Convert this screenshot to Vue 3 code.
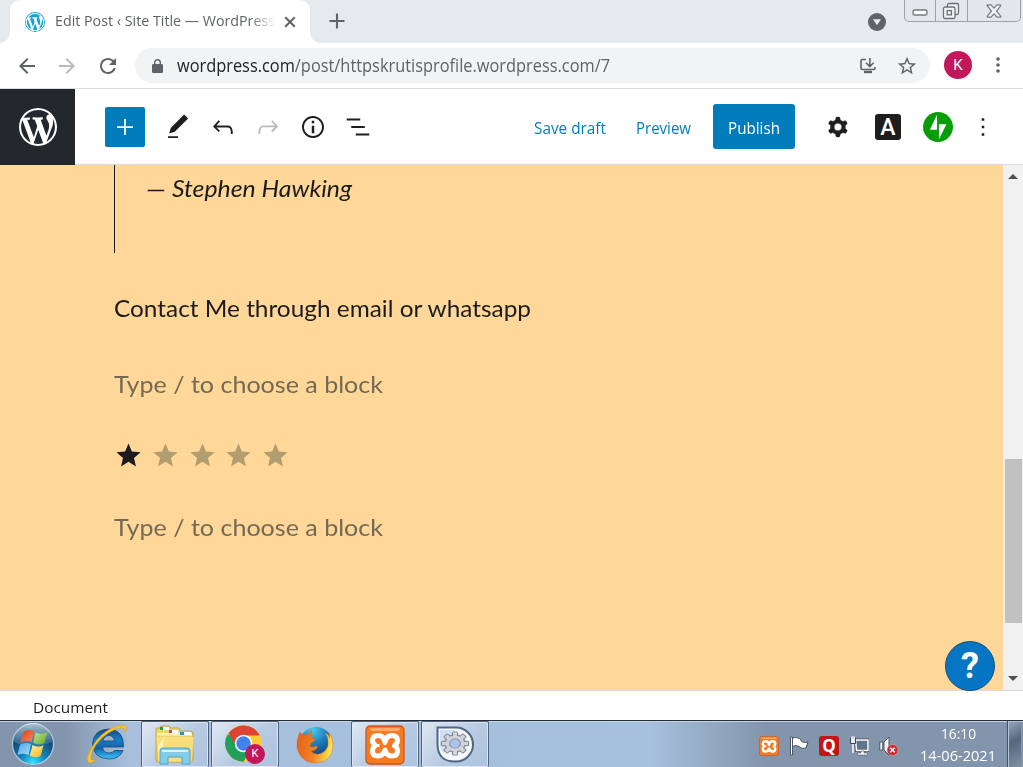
<script setup>
// Stretches a label horizontally so that it fills the given width in pixels.
const vFit = {
  mounted(el, { value }) {
    const natural = el.getBoundingClientRect().width
    el.style.transform = `scaleX(${value / natural})`
  },
}
const wp =
  'M20 10c0-5.51-4.49-10-10-10C4.48 0 0 4.49 0 10c0 5.52 4.48 10 10 10 5.51 0 10-4.48 10-10zM7.78 15.37L4.37 6.22c.55-.02 1.17-.08 1.17-.08.5-.06.44-1.13-.06-1.11 0 0-1.45.11-2.37.11-.18 0-.37 0-.58-.01C4.12 2.69 6.87 1.11 10 1.11c2.33 0 4.45.87 6.05 2.34-.68-.11-1.65.39-1.65 1.58 0 .74.45 1.36.9 2.1.35.61.55 1.36.55 2.46 0 1.49-1.4 5-1.4 5l-3.03-8.37c.54-.02.82-.17.82-.17.5-.05.44-1.25-.06-1.22 0 0-1.44.12-2.38.12-.87 0-2.33-.12-2.33-.12-.5-.03-.56 1.2-.06 1.22l.92.08 1.26 3.41zM17.41 10c.24-.64.74-1.87.43-4.25.7 1.29 1.05 2.71 1.05 4.25 0 3.29-1.73 6.24-4.4 7.78.97-2.59 1.94-5.2 2.92-7.78zM6.1 18.09C3.12 16.65 1.11 13.53 1.11 10c0-1.3.23-2.48.72-3.59C3.25 10.3 4.67 14.2 6.1 18.09zm4.03-6.63l2.58 6.98c-.86.29-1.76.45-2.71.45-.79 0-1.57-.11-2.29-.33.81-2.38 1.62-4.74 2.42-7.1z'
const back = 'M20 11H7.83l5.59-5.59L12 4l-8 8 8 8 1.41-1.41L7.83 13H20v-2z'
const star = 'M12 17.27L18.18 21l-1.64-7.03L22 9.24l-7.19-.61L12 2 9.19 8.63 2 9.24l5.46 4.73L5.82 21z'
const tools = [
  { name: 'edit', d: 'M20.1 5.1L16.9 2 6.2 12.7l-1.3 4.4 4.5-1.3L20.1 5.1zM4 20.8h8v-1.5H4v1.5z' },
  { name: 'undo', d: 'M18.3 11.7c-.6-.6-1.4-.9-2.3-.9H6.7l2.9-3.3-1.1-1-4.5 5L8.5 16l1-1-2.7-2.7H16c.5 0 .9.2 1.3.5 1 1 1 3.4 1 4.5v.3h1.5v-.2c0-1.5 0-4.3-1.5-5.7z' },
  { name: 'redo', off: true, d: 'M15.6 6.5l-1.1 1 2.9 3.3H8c-.9 0-1.7.3-2.3.9-1.4 1.5-1.4 4.2-1.4 5.6v.2h1.5v-.3c0-1.1 0-3.5 1-4.5.3-.3.7-.5 1.3-.5h9.2L14.5 15l1.1 1.1 4.6-4.6-4.6-5z' },
  { name: 'info', d: 'M12 3.2c-4.8 0-8.8 3.9-8.8 8.8 0 4.8 3.9 8.8 8.8 8.8 4.8 0 8.8-3.9 8.8-8.8 0-4.8-4-8.8-8.8-8.8zm0 16c-4 0-7.2-3.3-7.2-7.2C4.8 8 8 4.8 12 4.8s7.2 3.3 7.2 7.2c0 4-3.2 7.2-7.2 7.2zM11 17h2v-6h-2v6zm0-8h2V7h-2v2z' },
  { name: 'list', d: 'M13.8 5.2H3v1.5h10.8V5.2zm-3.6 12v1.5H21v-1.5H10.2zm7.2-6H6.6v1.5h10.8v-1.5z' },
]
const cog =
  'M10.289 4.836A1 1 0 0111.275 4h1.306a1 1 0 01.987.836l.244 1.466c.787.26 1.503.679 2.108 1.218l1.393-.522a1 1 0 011.216.437l.653 1.13a1 1 0 01-.23 1.273l-1.148.944a6.025 6.025 0 010 2.435l1.149.946a1 1 0 01.23 1.272l-.653 1.13a1 1 0 01-1.216.437l-1.394-.522c-.605.54-1.32.958-2.108 1.218l-.244 1.466a1 1 0 01-.987.836h-1.306a1 1 0 01-.986-.836l-.244-1.466a5.995 5.995 0 01-2.108-1.218l-1.394.522a1 1 0 01-1.217-.436l-.653-1.131a1 1 0 01.23-1.272l1.149-.946a6.026 6.026 0 010-2.435l-1.148-.944a1 1 0 01-.23-1.272l.653-1.131a1 1 0 011.217-.437l1.393.522a5.994 5.994 0 012.108-1.218l.244-1.466zM14.929 12a3 3 0 11-6 0 3 3 0 016 0z'
const teeth = [0, 45, 90, 135, 180, 225, 270, 315]
</script>

<template>
  <div class="screen">
    <header class="tabs">
      <i class="edge left"></i>
      <div class="tab">
        <svg class="fav" viewBox="0 0 20 20"><circle cx="10" cy="10" r="10" fill="#17a2d5" /><path :d="wp" fill="#fff" transform="translate(.9 .9) scale(.91)" /></svg>
        <div class="title"><span v-fit="220">Edit Post ‹ Site Title — WordPress</span></div>
        <svg class="close" viewBox="0 0 12 12"><path d="M1.2 1.2l9.6 9.6M10.800 1.200l-9.600 9.600" stroke="#5f6368" stroke-width="2" /></svg>
      </div>
      <i class="edge right"></i>
      <svg class="newtab" viewBox="0 0 16 16"><path d="M8 .5v15M.5 8h15" stroke="#5f6368" stroke-width="2.1" /></svg>
      <svg class="drop" viewBox="0 0 18 18"><circle cx="9" cy="9" r="9" fill="#606468" /><path d="M5 6.2h8L9 12.3z" fill="#e7eaed" /></svg>
      <div class="winctl">
        <div class="wbtn min"><svg width="16" height="8"><rect x="1" y="1" width="14" height="5" rx="1.5" fill="#fff" stroke="#74787c" stroke-width="1.3" /></svg></div>
        <div class="wbtn max"><svg width="18" height="18" fill="#eff1f3" stroke="#6d7175" stroke-width="1.3"><rect x="5.5" y="1.5" width="11" height="11" rx="1.5" /><rect x="1.5" y="5" width="11.5" height="11.5" rx="1.5" /><rect x="5.2" y="8.6" width="4.2" height="4.2" /></svg></div>
        <div class="wbtn cls"><svg width="16" height="14" viewBox="0 0 16 14"><path d="M1 1.5Q1 .8 2 .8H5L8 4.2 11 .8h3q1 0 .7 1L10.5 7l4.2 5.2q.3 1-.7 1h-3L8 9.8 5 13.2H2q-1 0-.7-1L5.5 7z" fill="#f2f3f4" stroke="#777b80" stroke-width="1.2" /></svg></div>
      </div>
    </header>

    <nav class="bar">
      <svg class="nav" viewBox="0 0 24 24"><path :d="back" fill="#5f6368" /></svg>
      <svg class="nav flip" viewBox="0 0 24 24"><path :d="back" fill="#b9bbbd" /></svg>
      <svg class="nav reload" viewBox="0 0 24 24"><path d="M17.65 6.35C16.2 4.9 14.21 4 12 4c-4.42 0-7.99 3.58-7.99 8s3.57 8 7.99 8c3.73 0 6.84-2.55 7.73-6h-2.08c-.82 2.33-3.04 4-5.65 4-3.31 0-6-2.69-6-6s2.69-6 6-6c1.66 0 3.14.69 4.22 1.78L13 11h7V4l-2.35 2.35z" fill="#5f6368" /></svg>
      <div class="omni">
        <svg width="11" height="14" viewBox="0 0 11 14"><rect y="5" width="11" height="9" rx="1.3" fill="#5f6368" /><path d="M2.7 6V3.5a2.8 2.8 0 015.6 0V6" fill="none" stroke="#5f6368" stroke-width="1.4" /></svg>
        <span v-fit="433" class="url"><b>wordpress.com</b>/post/httpskrutisprofile.wordpress.com/7</span>
        <svg class="install" width="16" height="16" viewBox="0 0 16 16" fill="none" stroke="#5f6368" stroke-width="1.6"><path d="M6 1.5H2.2Q1 1.5 1 2.7v7.6q0 1.2 1.2 1.2h11.6q1.2 0 1.2-1.2V9M9.8 0v8M6 4.8l3.8 3.8 3.8-3.8" /><path d="M4 14h8" stroke-width="2.4" /></svg>
        <svg class="fave" width="22" height="22" viewBox="0 0 24 24"><path d="M22 9.24l-7.19-.62L12 2 9.19 8.63 2 9.24l5.46 4.73L5.82 21 12 17.27 18.18 21l-1.63-7.03L22 9.24zM12 15.4l-3.76 2.27 1-4.28-3.32-2.88 4.38-.38L12 6.1l1.71 4.04 4.38.38-3.32 2.88 1 4.28L12 15.4z" fill="#5f6368" /></svg>
      </div>
      <div class="avatar">K</div>
      <svg class="kebab" width="4" height="16" fill="#5f6368"><circle cx="2" cy="2" r="1.8" /><circle cx="2" cy="8" r="1.8" /><circle cx="2" cy="14" r="1.8" /></svg>
    </nav>

    <section class="head">
      <div class="logo"><svg width="38" height="38" viewBox="0 0 20 20"><path :d="wp" fill="#fff" /></svg></div>
      <div class="add"><svg class="ic" viewBox="0 0 24 24"><path d="M18.4 11.3h-5.7V5.6h-1.4v5.7H5.6v1.4h5.7v5.7h1.4v-5.7h5.7z" fill="#fff" /></svg></div>
      <div class="tools"><svg v-for="t in tools" :key="t.name" class="ic" :class="{ off: t.off }" viewBox="0 0 24 24"><path :d="t.d" /></svg></div>
      <div class="actions">
        <div class="save"><span v-fit="72">Save draft</span></div>
        <div class="prev"><span v-fit="55">Preview</span></div>
        <div class="publish"><span v-fit="52">Publish</span></div>
        <svg class="ic cog" viewBox="0 0 24 24"><path :d="cog" fill-rule="evenodd" stroke="#1e1e1e" stroke-width=".3" /></svg>
        <div class="abox">A</div>
        <svg class="jet" viewBox="0 0 32 32"><path fill="#069e08" d="M16,0C7.2,0,0,7.2,0,16s7.2,16,16,16s16-7.2,16-16S24.8,0,16,0z" /><path fill="#fff" d="M15 19H7.3L15 3zM17 29V13h8z" /></svg>
        <svg class="ic" viewBox="0 0 24 24"><path d="M13 19h-2v-2h2v2zm0-6h-2v-2h2v2zm0-6h-2V5h2v2z" /></svg>
      </div>
    </section>

    <main class="work">
      <div class="canvas">
        <div class="quote"><div class="dash"><span v-fit="20">—</span></div><span v-fit="180">Stephen Hawking</span></div>
        <p class="para contact"><span v-fit="417">Contact Me through email or whatsapp</span></p>
        <p class="para hint"><span v-fit="269">Type / to choose a block</span></p>
        <div class="stars"><svg v-for="n in 5" :key="n" :class="{ dim: n > 1 }" viewBox="0 0 24 24"><path :d="star" /></svg></div>
        <p class="para hint last"><span v-fit="269">Type / to choose a block</span></p>
      </div>
      <div class="scroll">
        <svg width="10" height="5"><path d="M0 5L5 0l5 5z" fill="#505050" /></svg>
        <div class="thumb"></div>
        <svg width="10" height="5"><path d="M0 0l5 5 5-5z" fill="#505050" /></svg>
      </div>
      <div class="help">?</div>
    </main>
    <footer class="crumb"><span v-fit="75">Document</span></footer>

    <div class="task">
      <svg class="start" width="44" height="44" viewBox="0 0 44 44">
        <defs>
          <radialGradient id="orb" cx=".5" cy=".95" r=".85"><stop offset="0" stop-color="#35e6ff" /><stop offset=".35" stop-color="#1384bc" /><stop offset=".75" stop-color="#124b78" /><stop offset="1" stop-color="#1b4268" /></radialGradient>
          <linearGradient id="gls" x2="0" y2="1"><stop stop-color="#e3f2fa" stop-opacity=".75" /><stop offset="1" stop-color="#a9cbe0" stop-opacity=".15" /></linearGradient>
          <linearGradient id="wr" x2="1" y2="1"><stop stop-color="#d9401c" /><stop offset="1" stop-color="#f98a5b" /></linearGradient>
          <linearGradient id="wg" x2="1" y2="1"><stop stop-color="#c6e58c" /><stop offset="1" stop-color="#5fa82c" /></linearGradient>
          <linearGradient id="wb" x2="1" y2="1"><stop stop-color="#4aa4e0" /><stop offset="1" stop-color="#a7e0fb" /></linearGradient>
          <linearGradient id="wy" x2="1" y2="1"><stop stop-color="#fff0a0" /><stop offset="1" stop-color="#f6b321" /></linearGradient>
        </defs>
        <circle cx="22" cy="22" r="20.5" fill="url(#orb)" stroke="#b3cbdc" stroke-width="1.2" />
        <path d="M3 20a19 19 0 0138 0Q22 28 3 20z" fill="url(#gls)" />
        <path d="M12.500 9.500q5-3 10.500-.4l-2.400 11Q15 17.500 9.500 20.500z" fill="url(#wr)" />
        <path d="M24.500 10.500q6 2.500 12-.5l-3 11q-5 3-11.400-.2z" fill="url(#wg)" />
        <path d="M9 22.500q5-3 11-.2l-2.600 10.700Q12 30.500 6.500 33z" fill="url(#wb)" />
        <path d="M21.500 23q5.500 3 11 .2l-2.800 10.500q-5 3-10.900.1z" fill="url(#wy)" />
      </svg>
      <svg class="ie" width="44" height="42" viewBox="0 0 44 42">
        <defs><linearGradient id="ieg" x2="0" y2="1"><stop stop-color="#154b85" /><stop offset=".35" stop-color="#187cc4" /><stop offset=".65" stop-color="#1164ab" /><stop offset="1" stop-color="#38c8fa" /></linearGradient></defs>
        <path d="M38.500 24H17.500q.8 6 6.500 6 3.800 0 5.800-2.500H38Q34.500 36 24 36 8 35 7.500 21 8.500 6.500 24 6q15 1 14.500 18zM17.500 18h12Q28.500 12.500 24 12.500t-6.500 5.500z" fill="url(#ieg)" fill-rule="evenodd" stroke="#174875" stroke-width=".8" />
        <path d="M39.500 9Q41 2.500 31 6 14 13 7 29 3 41 12 35.500q-3 3.500-6 4.500Q-1 40 5 28 14 9 32 3q12-3 9 5z" fill="#fbc42b" stroke="#d89a19" stroke-width=".5" />
      </svg>
      <div class="app lit stack">
        <svg width="42" height="41" viewBox="0 0 42 41">
          <path d="M2 8V4q0-1 1-1h3l1-2h8l1 2h9l1 3h10q3 0 3 3v24q0 4-3 4H5q-3 0-3-3z" fill="#f1d56d" stroke="#bd9639" stroke-width=".8" />
          <path d="M3 8h35v3H3z" fill="#fff2b1" /><path d="M7 2h8v3H7z" fill="#fff" /><path d="M6 2h3v3H6z" fill="#259d55" /><path d="M15 5h9v3h-9z" fill="#fff" /><path d="M15 5h3v3h-3z" fill="#dc4030" /><path d="M26 7h11v3H26z" fill="#fff" /><path d="M26 7h4v3h-4z" fill="#3688ca" />
          <path d="M2 11h35q3 0 3 2L38 37H4z" fill="#f8df7c" stroke="#d9b34d" stroke-width=".5" />
          <path d="M11 11L5 37l-1-16z" fill="#fff5c2" opacity=".8" />
          <path d="M6 26q0-3 3-3h24q3 0 3 3v13h-8v-7H14v7H6z" fill="#82cdea" stroke="#4da4c9" /><path d="M8 25h26v2H8z" fill="#d5f4ff" />
        </svg>
      </div>
      <div class="app lit">
        <svg width="40" height="40" viewBox="0 0 40 40">
          <circle cx="18.500" cy="18.500" r="18.300" fill="#fccb3a" />
          <path d="M18.500 18.500L2.700 9.300A18.300 18.300 0 0018.500 36.800L26 23z" fill="#21a05c" />
          <path d="M18.500 10.500H35L34.300 9.500A18.300 18.300 0 003.500 8.300L11 21z" fill="#dc4335" />
          <circle cx="18.500" cy="18.500" r="8.800" fill="#fff" /><circle cx="18.500" cy="18.500" r="7.200" fill="#4381ef" />
        </svg>
        <span class="kbadge">K</span>
      </div>
      <div class="app">
        <svg width="38" height="38" viewBox="0 0 38 38">
          <defs><radialGradient id="fx" cx=".4" cy=".1" r=".9"><stop stop-color="#4fcbee" /><stop offset=".5" stop-color="#1b78b8" /><stop offset="1" stop-color="#12366d" /></radialGradient><linearGradient id="fo" x2="1" y2=".2"><stop stop-color="#e2601a" /><stop offset=".6" stop-color="#f08424" /><stop offset="1" stop-color="#fbe052" /></linearGradient></defs>
          <circle cx="20" cy="17.500" r="16.500" fill="url(#fx)" />
          <path d="M4 6q1 2.500 3 3 3-1 5 0 1-3 3.500-4.500Q14.500 8 16 12q3 0 3 2-1 2-4 3l-1 3q2 2 6 0 2 0 1 2-2 3-6 3 4 5 11 2 7-4 6-12-.5-5-3-8 4 1 4.500 5 .5-3-1-6 4 4 4.500 12Q37 36 20 37 5 37 1 22q-1-7 3-16z" fill="url(#fo)" stroke="#d95c16" stroke-width=".4" />
        </svg>
      </div>
      <div class="app lit">
        <svg width="40" height="40" viewBox="0 0 40 40"><use href="#xampp" /></svg>
      </div>
      <div class="app lit">
        <svg width="38" height="38" viewBox="0 0 38 38">
          <path d="M1.500 1.500H20a16.800 16.800 0 010 34Q1.500 36 1.500 18z" fill="#f4f8fe" stroke="#526681" stroke-width="2" /><path d="M4 4h15L8 27Q4 24 4 18z" fill="#b8cff0" opacity=".6" />
          <g transform="translate(19 17.500) scale(1.120 .96)"><g fill="#cdd0d6" stroke="#858b96" stroke-width="1.200"><rect v-for="a in teeth" :key="a" x="-2.200" y="-12" width="4.400" height="8" rx="1" :transform="`rotate(${a})`" /><circle r="9" /></g><g fill="#d2d4d9"><rect v-for="a in teeth" :key="a" x="-1.700" y="-11.400" width="3.400" height="8" :transform="`rotate(${a})`" /></g><circle r="4.800" fill="#a7c5ef" stroke="#858b96" stroke-width=".9" /></g>
        </svg>
      </div>
      <div class="tray">
        <svg width="20" height="20" viewBox="0 0 40 40">
          <defs><g id="xampp"><rect x="1" y="1" width="38" height="38" rx="4" fill="#f77a20" stroke="#c9591a" stroke-width="1.300" /><path d="M5 3h30q0 3-3 3H8Q5 6 5 3z" fill="#ffb982" opacity=".8" /><path d="M20 17.500Q19 10.500 13 10.500 7.500 10.500 7.500 15.500 7.500 18.500 10.500 20.500 7.500 22 7.500 26 7.500 31 13 31 18 31 20 25 22 31 27 31 32.500 31 32.500 26 32.500 22 29.500 20.500 32.500 18.500 32.500 15.500 32.500 10.500 27 10.500 21 10.500 20 17.500z" fill="none" stroke="#fff" stroke-width="5" stroke-linejoin="round" /><path d="M10.500 20.500h4" stroke="#fff" stroke-width="3" /></g></defs>
          <use href="#xampp" />
        </svg>
        <svg width="20" height="20" viewBox="0 0 20 20"><path d="M1.500 1h2v18h-2z" fill="#fff" stroke="#3f4855" stroke-width=".9" /><path d="M3.500 2q4-1.500 8 1 0 2 2 3 3 1 5.500 0l-2 6q-4 1.500-7-1.500-3-2-6.500 0z" fill="#fff" stroke="#3f4855" stroke-width=".9" /></svg>
        <div class="q">Q</div>
        <svg width="20" height="20" viewBox="0 0 20 20"><path d="M6.500 4H19v10.500H7.500z" fill="#60758c" stroke="#3f4855" stroke-width="3" /><path d="M6.500 4H19v10.500H7.500z" fill="#60758c" stroke="#fff" stroke-width="1.500" /><path d="M12 15h3v2h3.500v2H8.500v-2H12z" fill="#fff" stroke="#4b5869" stroke-width=".6" /><path d="M1.500 2h5v5.500h-5z" fill="#e9edf2" stroke="#3b4552" /><path d="M3 .5V3M5 .5V3M4 8v9" stroke="#fff" stroke-width="1.500" fill="none" /></svg>
        <svg width="20" height="20" viewBox="0 0 20 20"><path d="M.8 6h3v8h-3zM5 6l5-5v18l-5-5z" fill="#f5f7fa" stroke="#3f4855" stroke-width=".9" /><circle cx="13.500" cy="14" r="5.500" fill="#cf2931" stroke="#f1b7b8" stroke-width=".5" /><path d="M11.300 11.800l4.400 4.400M15.700 11.800l-4.400 4.400" stroke="#fff" stroke-width="1.600" /></svg>
      </div>
      <div class="clock"><div><span v-fit="35">16:10</span></div><div><span v-fit="76">14-06-2021</span></div></div>
      <div class="peek"></div>
    </div>
  </div>
</template>

<style>
body { margin: 0; overflow: hidden; }
</style>
<style scoped>
* { box-sizing: border-box; }
.screen { width: 1023px; height: 767px; display: flex; flex-direction: column; font-family: "Open Sans", "Noto Sans", sans-serif; overflow: hidden; background: #fff; position: relative; }
svg { display: block; flex: none; }
span { white-space: nowrap; display: inline-block; transform-origin: 0 50%; }
.tabs { height: 43px; background: #e7eaed; display: flex; flex: none; align-items: flex-start; }
.edge { width: 10px; height: 43px; flex: none; }
.edge.left { background: radial-gradient(circle at 0 0, #e7eaed 9.500px, #fff 10px) 0 33px / 10px 10px no-repeat; }
.edge.right { background: radial-gradient(circle at 100% 0, #e7eaed 9.500px, #fff 10px) 0 33px / 10px 10px no-repeat; }
.tab { width: 300px; height: 43px; background: #fff; border-radius: 10px 10px 0 0; display: flex; align-items: center; padding-left: 15px; flex: none; }
.fav { width: 20px; height: 20px; }
.title { width: 219px; margin-left: 10px; font-size: 14.500px; color: #5f6368; line-height: 20px; padding-bottom: 1px; display: flex; mask-image: linear-gradient(90deg, #000 195px, transparent 221px); }
.close { width: 12px; height: 12px; margin-left: 10px; }
.newtab { width: 16px; height: 16px; margin: 13px 0 0 9px; }
.drop { width: 18px; height: 18px; margin: 13px 0 0 523px; }
.winctl { display: flex; height: 22px; width: 117px; margin-left: 18px; border: 1px solid #9da1a6; border-top: 0; border-radius: 0 0 5px 5px; flex: none; background: #e4e7ea; }
.wbtn { display: flex; justify-content: center; align-items: center; border-right: 1px solid #9da1a6; height: 21px; }
.min { width: 31px; padding-top: 5px; }
.max { width: 32px; padding-right: 2px; }
.cls { flex: 1; border: 0; padding-right: 1px; }
.bar { height: 46px; border-bottom: 1px solid #dadce0; display: flex; align-items: center; flex: none; padding-left: 15px; }
.nav { width: 24px; height: 24px; margin-right: 16px; }
.reload { margin: 0 15px 0 1px; }
.flip { transform: scaleX(-1); }
.omni { width: 795px; height: 35px; border-radius: 18px; background: #f1f3f4; display: flex; align-items: center; padding-left: 17px; flex: none; }
.url { font-size: 17.500px; color: #5f6368; margin: 0 0 2px 14px; line-height: 24px; }
.url b { font-weight: 400; color: #202124; }
.install { margin-left: auto; }
.fave { margin: 0 12px 0 20px; }
.avatar { width: 28px; height: 28px; border-radius: 50%; background: #c2185b; color: #fff; font: 15px/28px Roboto, sans-serif; text-align: center; margin-left: 14px; margin-bottom: 1px; flex: none; }
.kebab { margin-left: 24px; margin-bottom: 1px; }
.head { height: 76px; border-bottom: 1px solid #dcdcde; display: flex; align-items: center; flex: none; }
.logo { width: 75px; height: 76px; background: #23282d; display: flex; align-items: center; justify-content: center; align-self: flex-start; flex: none; }
.add { width: 40px; height: 40px; margin-left: 30px; background: #007cba; border-radius: 2px; display: flex; align-items: center; justify-content: center; }
.ic { width: 30px; height: 30px; fill: #1e1e1e; }
.off { fill: #bbb; }
.tools { display: flex; gap: 15px; margin-left: 18px; }
.actions { display: flex; align-items: center; margin-left: 161px; font-size: 15.500px; color: #007cba; }
.save { width: 102px; padding-top: 2px; }
.prev { width: 77px; padding-top: 2px; }
.publish { width: 82px; height: 45px; line-height: 48px; padding-left: 15px; border-radius: 3px; background: #007cba; color: #fff; }
.cog { margin-left: 28px; }
.abox { width: 26px; height: 26px; border-radius: 3px; background: #1e1e1e; color: #fff; font: 500 23px/27px Roboto, sans-serif; text-align: center; margin-left: 22px; }
.jet { width: 30px; height: 30px; margin: 0 15px 0 22px; }
.work { height: 526px; display: flex; border-bottom: 1px solid #dcdcde; position: relative; flex: none; }
.canvas { width: 1003px; background: #ffd899; color: #1b1b1f; font-family: Lato, sans-serif; font-size: 22.500px; padding-left: 114px; }
.quote { border-left: 1px solid #1a1a1e; height: 88px; padding: 9px 0 0 31px; line-height: 30px; font-style: italic; display: flex; }
.dash { width: 26px; }
.para { margin: 0; line-height: 36px; }
.contact { margin-top: 38px; }
.hint { margin-top: 40px; color: #746a53; }
.stars { display: flex; gap: 7.700px; height: 29px; margin-top: 38px; padding-left: .4px; }
.stars svg { width: 29px; height: 29px; fill: #1b1b1d; }
.stars .dim { fill: #b29d70; }
.last { margin-top: 40px; }
.scroll { width: 20px; background: #f1f1f1; display: flex; flex-direction: column; align-items: center; padding: 9px 0 9px; }
.thumb { width: 17px; height: 164px; margin: 280px 0 auto 1px; background: #c1c1c1; }
.help { position: absolute; left: 945px; top: 476px; width: 50px; height: 50px; border-radius: 50%; background: #0675c4; border: 1px solid #14527d; color: #fff; font: 700 36px/49px Roboto, sans-serif; text-align: center; }
.crumb { height: 29px; padding: 5px 0 0 33px; font-size: 15px; line-height: 22px; color: #1e1e1e; flex: none; }
.task { height: 47px; border-top: 1px solid #232d38; box-shadow: inset 0 1px #c6d5e5; background: linear-gradient(90deg, #8295ac 0, #8295ac 65px, #a8c0dd 130px, #a6bfdc 500px, #a7c0dd 650px, #8295ac 765px); display: flex; align-items: center; flex: none; }
.start { margin-left: 11px; }
.ie { margin-left: 30px; margin-right: 12px; }
.app { width: 68px; height: 46px; margin-right: 2px; display: flex; align-items: center; justify-content: center; position: relative; flex: none; padding-top: 1px; }
.lit { border: 1px solid #516278; border-bottom: 0; border-radius: 2px; box-shadow: inset 0 0 0 1px #dce7f3; background: linear-gradient(135deg, #dfe8f3, #b7cae2 55%, #adc3df); }
.kbadge { position: absolute; right: 13px; bottom: 3px; width: 20px; height: 20px; border-radius: 50%; background: #c2185b; color: #fff; font: 11px/20px Roboto, sans-serif; text-align: center; }
.tray { display: flex; gap: 10px; width: 142px; margin-left: 268px; padding-top: 3px; flex: none; }
.q { width: 20px; height: 20px; flex: none; border-radius: 3px; background: #c61219; color: #fff; font: 700 17px/19px "Open Sans", sans-serif; text-align: center; }
.clock { width: 106px; padding: 2px 0 0 19px; color: #fff; font-size: 14.500px; line-height: 22px; flex: none; }
.clock div:first-child { padding-left: 21px; }
.peek { width: 14px; height: 46px; border-left: 1px solid #3e5068; box-shadow: inset 1px 1px #b6c3d1; background: linear-gradient(150deg, #9aa8b9, #56687e 45%, #8091a6); }
</style>
